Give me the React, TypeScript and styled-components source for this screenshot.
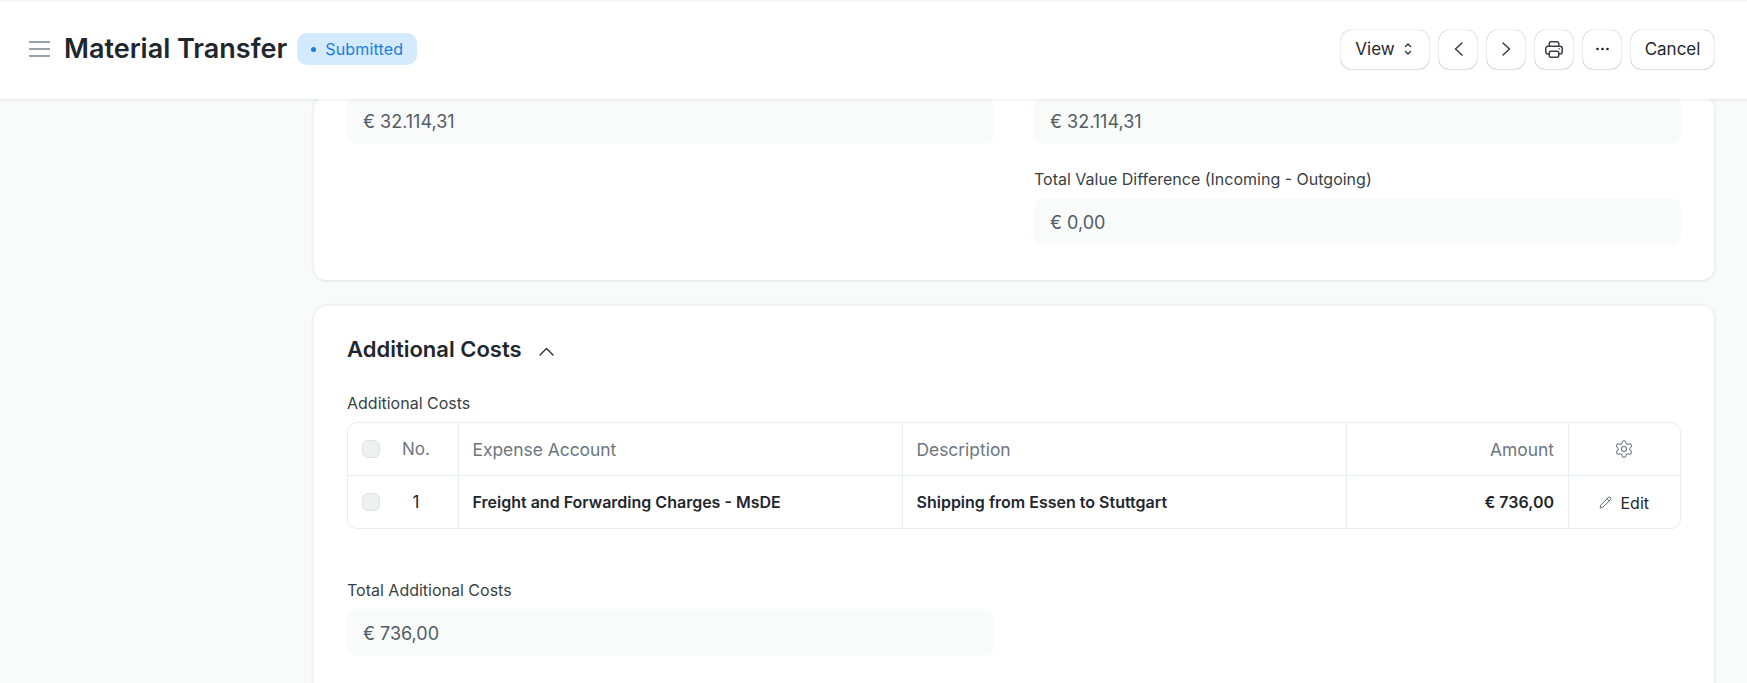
import React from "react";
import styled, { createGlobalStyle } from "styled-components";
import { Settings, Pencil } from "lucide-react";

const Global = createGlobalStyle`
  html, body { margin: 0; padding: 0; height: 100%; overflow: hidden; background: #f9fafa; }
  body { font-family: Inter, "Noto Sans", sans-serif; color: #1f272e; }
`;

const Page = styled.div`
  width: 1747px;
  height: 683px;
  overflow: hidden;
  background: #f9fafa;
`;

const Header = styled.header`
  position: relative;
  z-index: 2;
  height: 99px;
  box-sizing: border-box;
  background: #fff;
  box-shadow: 0 1px 3px rgba(25, 39, 52, 0.1), inset 0 2px 2px -1px rgba(25, 39, 52, 0.06);
  display: flex;
  align-items: center;
  justify-content: space-between;
  padding: 0 33px 1px 29px;
`;

const TitleGroup = styled.div`
  display: flex;
  align-items: center;
`;

const MenuIcon = styled.svg`
  width: 21px;
  height: 18px;
  margin-right: 14px;
  display: block;
`;

const Title = styled.h1`
  margin: 0 10px 0 0;
  font-size: 27px;
  line-height: 32px;
  font-weight: 600;
  color: #1f272e;
  white-space: nowrap;
`;

const Badge = styled.span`
  display: inline-flex;
  align-items: center;
  height: 32px;
  box-sizing: border-box;
  padding: 0 14px;
  border-radius: 10px;
  background: #d3e9fc;
  color: #1a7fdb;
  font-size: 16px;
  letter-spacing: 0.01em;
  white-space: nowrap;
`;

const Dot = styled.i`
  width: 5px;
  height: 5px;
  border-radius: 50%;
  background: #1a7fdb;
  margin-right: 9px;
`;

const Actions = styled.div`
  display: flex;
  align-items: center;
  gap: 10px;
`;

const Button = styled.button<{ $w: number; $pr?: number }>`
  width: ${(p) => p.$w}px;
  height: 39px;
  box-sizing: border-box;
  padding: 0 ${(p) => p.$pr ?? 0}px 0 0;
  display: flex;
  align-items: center;
  justify-content: center;
  background: #fff;
  border: 0;
  border-radius: 10px;
  box-shadow: 0 0 1px rgba(0, 0, 0, 0.45), 0 1px 2px rgba(0, 0, 0, 0.1);
  color: #1f272e;
  font: 400 17px Inter, sans-serif;
`;

const ViewCaret = styled.svg`
  width: 10px;
  height: 16px;
  margin-left: 8px;
`;

const Main = styled.main`
  width: 1400px;
  margin: 0 0 0 314px;
  display: flex;
  flex-direction: column;
  gap: 26px;
`;

const Card = styled.section<{ $cut?: boolean }>`
  background: #fff;
  box-sizing: border-box;
  border-radius: 12px;
  box-shadow: 0 1px 2px rgba(25, 39, 52, 0.05), 0 0 4px rgba(25, 39, 52, 0.1);
  padding: 0 33px;
  margin-top: ${(p) => (p.$cut ? "-2px" : "0")};
  height: ${(p) => (p.$cut ? "183px" : "400px")};
`;

const FieldGrid = styled.div`
  display: grid;
  grid-template-columns: 647px 647px;
  column-gap: 40px;
`;

const Field = styled.div<{ $col?: number; $top?: number }>`
  ${(p) => (p.$col ? `grid-column: ${p.$col};` : "")}
  margin-top: ${(p) => p.$top ?? 0}px;
`;

const Label = styled.div`
  font-size: 16px;
  line-height: 18px;
  color: #383f46;
  margin-bottom: 10px;
`;

const ValueBox = styled.div<{ $half?: boolean }>`
  height: 47px;
  width: ${(p) => (p.$half ? "647px" : "auto")};
  box-sizing: border-box;
  padding: 1px 16px 0;
  display: flex;
  align-items: center;
  background: #f9fafa;
  border-radius: 10px;
  color: #525c66;
  font-size: 18px;
`;

const SectionHead = styled.div`
  display: flex;
  align-items: center;
  height: 88px;
  padding-bottom: 2px;
  box-sizing: border-box;
`;

const SectionTitle = styled.h2`
  margin: 0 17px 0 0;
  font-size: 22px;
  font-weight: 600;
  color: #1f272e;
`;

const Chevron = styled.svg`
  margin-top: 5px;
`;

const Table = styled.div`
  width: 1334px;
  box-sizing: border-box;
  border: 1px solid #e9edf0;
  border-radius: 10px;
  display: grid;
  grid-template-columns: 111px 444px 444px 222px 1fr;
  grid-template-rows: 53px 52px;
`;

const Cell = styled.div<{ $align?: string; $head?: boolean; $last?: boolean; $bold?: boolean }>`
  display: flex;
  align-items: center;
  justify-content: ${(p) => p.$align ?? "flex-start"};
  padding: 0 14px 0 13.5px;
  box-sizing: border-box;
  border-right: ${(p) => (p.$last ? "0" : "1px solid #e9edf0")};
  border-bottom: ${(p) => (p.$head ? "1px solid #e9edf0" : "0")};
  font-size: ${(p) => (p.$head ? "17.4px" : "16px")};
  font-weight: ${(p) => (p.$bold ? 600 : 400)};
  color: ${(p) => (p.$head ? "#6c7680" : "#1f272e")};
`;

const NoCell = styled(Cell)`
  padding: 0 6px 0 14px;
  font-size: 17px;
`;

const Check = styled.span`
  width: 18px;
  height: 18px;
  flex: none;
  box-sizing: border-box;
  background: #eef0f1;
  border: 1px solid #dfe3e6;
  border-radius: 6px;
`;

const Num = styled.span`
  flex: 1;
  text-align: center;
`;

const EditLabel = styled.span`
  margin-left: 8px;
  padding-top: 2px;
  font-size: 16px;
  font-weight: 400;
`;

const Spacer = styled.div`
  height: 52px;
`;

export default function App() {
  return (
    <Page>
      <Global />
      <Header>
        <TitleGroup>
          <MenuIcon viewBox="0 0 21 18" fill="none" stroke="#99a1aa" strokeWidth="2">
            <path d="M0 2h21M0 9h21M0 16h21" />
          </MenuIcon>
          <Title>Material Transfer</Title>
          <Badge>
            <Dot />
            Submitted
          </Badge>
        </TitleGroup>
        <Actions>
          <Button $w={88} $pr={2}>
            View
            <ViewCaret viewBox="0 0 10 16" fill="none" stroke="#1f272e" strokeWidth="1.2" strokeLinecap="round" strokeLinejoin="round">
              <path d="M2.5 5.5 5 3l2.5 2.5M2.5 10.5 5 13l2.5-2.5" />
            </ViewCaret>
          </Button>
          <Button $w={38}>
            <svg width="9" height="14" viewBox="0 0 9 14" fill="none" stroke="#383f46" strokeWidth="1.5" strokeLinecap="round" strokeLinejoin="round">
              <path d="M8 1 1.5 7 8 13" />
            </svg>
          </Button>
          <Button $w={38}>
            <svg width="9" height="14" viewBox="0 0 9 14" fill="none" stroke="#383f46" strokeWidth="1.5" strokeLinecap="round" strokeLinejoin="round">
              <path d="M1 1l6.5 6L1 13" />
            </svg>
          </Button>
          <Button $w={38}>
            <svg width="18" height="17" viewBox="0 0 18 17" fill="none" stroke="#383f46" strokeWidth="1.5" strokeLinejoin="round">
              <path d="M4.25 5.25V2.5a1.75 1.75 0 0 1 1.75-1.75h6a1.75 1.75 0 0 1 1.75 1.75v2.75" />
              <path d="M4 13H3a2.25 2.25 0 0 1-2.25-2.25v-3.25A2.25 2.25 0 0 1 3 5.25h12a2.25 2.25 0 0 1 2.25 2.25v3.25A2.25 2.25 0 0 1 15 13h-1" />
              <rect x="4.25" y="10.25" width="9.5" height="6" rx="1.5" fill="#fff" />
              <path d="M13.5 7.75h1.5" strokeWidth="1.2" />
            </svg>
          </Button>
          <Button $w={38}>
            <svg width="13" height="4" viewBox="0 0 13 4" fill="#1f272e">
              <circle cx="1.5" cy="2" r="1.3" /><circle cx="6.5" cy="2" r="1.3" /><circle cx="11.5" cy="2" r="1.3" />
            </svg>
          </Button>
          <Button $w={83}>Cancel</Button>
        </Actions>
      </Header>
      <Main>
        <Card $cut>
          <FieldGrid>
            <Field>
              <ValueBox>€ 32.114,31</ValueBox>
            </Field>
            <Field>
              <ValueBox>€ 32.114,31</ValueBox>
            </Field>
            <Field $col={2} $top={26}>
              <Label>Total Value Difference (Incoming - Outgoing)</Label>
              <ValueBox>€ 0,00</ValueBox>
            </Field>
          </FieldGrid>
        </Card>
        <Card>
          <SectionHead>
            <SectionTitle>Additional Costs</SectionTitle>
            <Chevron width="15" height="9" viewBox="0 0 15 9" fill="none" stroke="#1f272e" strokeWidth="1.3" strokeLinecap="round" strokeLinejoin="round">
              <path d="M1 8l6.5-6.5L14 8" />
            </Chevron>
          </SectionHead>
          <Label>Additional Costs</Label>
          <Table>
            <NoCell $head><Check /><Num>No.</Num></NoCell>
            <Cell $head>Expense Account</Cell>
            <Cell $head>Description</Cell>
            <Cell $head $align="flex-end">Amount</Cell>
            <Cell $head $last $align="center"><Settings size={20} strokeWidth={1.3} color="#6c7680" /></Cell>
            <NoCell><Check /><Num>1</Num></NoCell>
            <Cell $bold>Freight and Forwarding Charges - MsDE</Cell>
            <Cell $bold>Shipping from Essen to Stuttgart</Cell>
            <Cell $bold $align="flex-end">€ 736,00</Cell>
            <Cell $last $align="center"><Pencil size={13} strokeWidth={1.3} /><EditLabel>Edit</EditLabel></Cell>
          </Table>
          <Spacer />
          <Field>
            <Label>Total Additional Costs</Label>
            <ValueBox $half>€ 736,00</ValueBox>
          </Field>
        </Card>
      </Main>
    </Page>
  );
}
